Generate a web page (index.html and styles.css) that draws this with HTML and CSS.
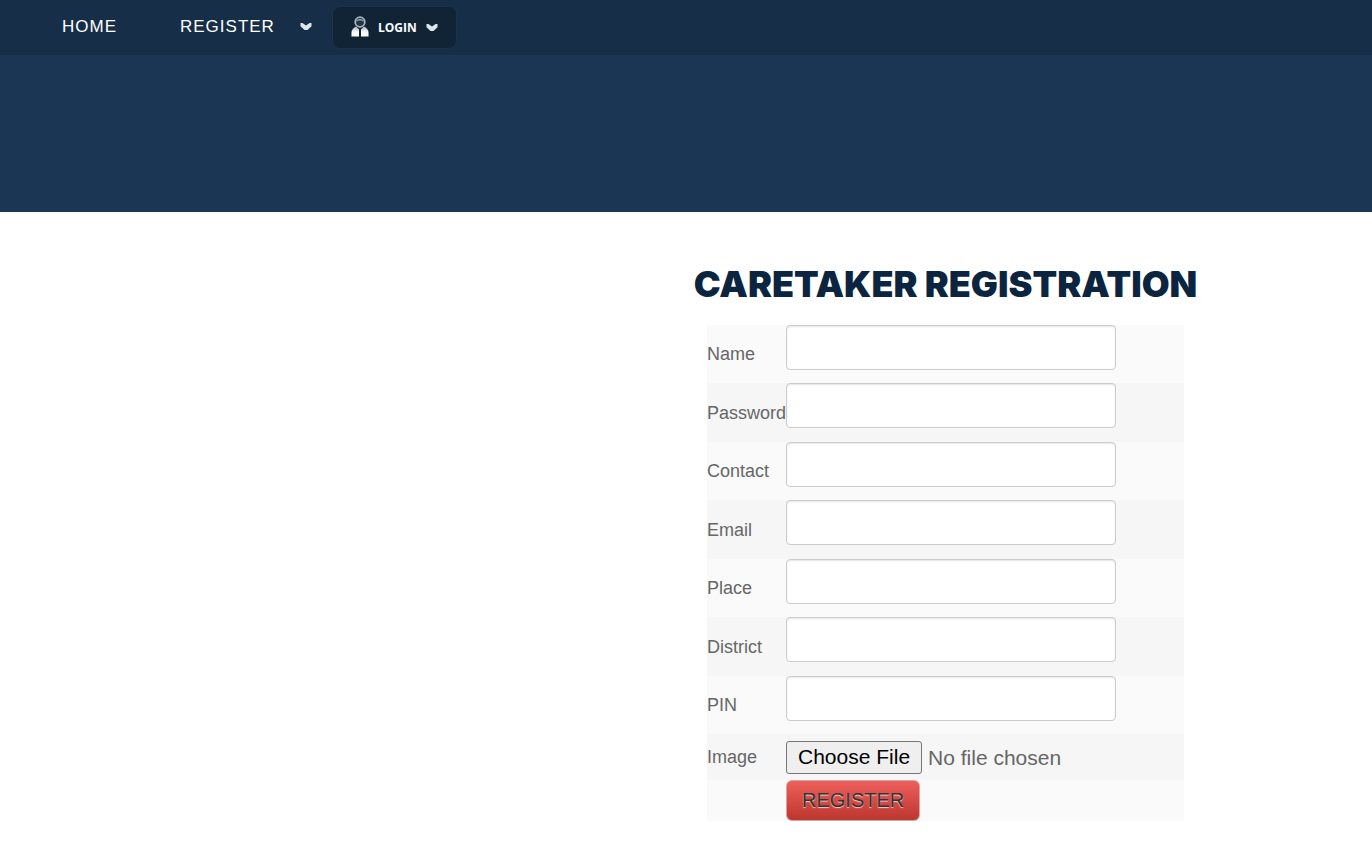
FILE: index.html
```html
<!DOCTYPE html>
<html lang="en">
<head>
<meta charset="utf-8">
<meta name="viewport" content="width=device-width, initial-scale=1">
<title>Caretaker Registration</title>
<link rel="stylesheet" href="styles.css">
</head>
<body>
<header class="banner">
  <nav class="navbar">
    <a class="nav-link" href="#">HOME</a>
    <a class="nav-link nav-register" href="#">REGISTER
      <svg class="chevron" viewBox="0 0 12 9" aria-hidden="true"><path d="M.5 1H2.500L6 3.600 9.500 1h2v3.200L7.500 8h-3L.5 4.200z"/></svg>
    </a>
    <button class="login" type="button">
      <svg class="person" viewBox="0 0 18 21" aria-hidden="true">
        <defs><linearGradient id="coat" x2="0" y2="1"><stop stop-color="#a9b2ba"/><stop offset="0.6" stop-color="#fff"/></linearGradient></defs>
        <circle cx="9" cy="6" r="4.8" fill="#203649" stroke="#a9b2ba" stroke-width="1.800"/>
        <path d="M5.500 5Q9 2.500 12.500 5" fill="none" stroke="#8d99a4" stroke-width="1.500"/>
        <path d="M5 10.500 8 13.500V20.500H.5v-4.500Q1 12.500 5 10.500zM13 10.500 10 13.500V20.500h7.500v-4.500Q17 12.500 13 10.500z" fill="url(#coat)"/>
      </svg>
      <span>LOGIN</span>
      <svg class="chevron" viewBox="0 0 12 9" aria-hidden="true"><path d="M.5 1H2.500L6 3.600 9.500 1h2v3.200L7.500 8h-3L.5 4.200z"/></svg>
    </button>
  </nav>
</header>
<main class="page">
  <section class="registration">
    <h1 class="title">CARETAKER REGISTRATION</h1>
    <form class="form">
      <div class="row"><label for="name">Name</label><input class="field" id="name" type="text"></div>
      <div class="row"><label for="password">Password</label><input class="field" id="password" type="password"></div>
      <div class="row"><label for="contact">Contact</label><input class="field" id="contact" type="text"></div>
      <div class="row"><label for="email">Email</label><input class="field" id="email" type="text"></div>
      <div class="row"><label for="place">Place</label><input class="field" id="place" type="text"></div>
      <div class="row"><label for="district">District</label><input class="field" id="district" type="text"></div>
      <div class="row"><label for="pin">PIN</label><input class="field" id="pin" type="text"></div>
      <div class="row row-file"><label for="image">Image</label><input class="file" id="image" type="file"></div>
      <div class="row row-submit"><button class="submit" type="submit">REGISTER</button></div>
    </form>
  </section>
</main>
</body>
</html>
```
FILE: styles.css
```css
* { box-sizing: border-box; }

body {
  margin: 0;
  background: #fff;
  color: #666;
  font-family: "Liberation Sans", Arial, sans-serif;
  font-size: 18px;
  line-height: 24px;
}

.banner {
  min-height: 212px;
  background: #1a3654;
}

.navbar {
  display: flex;
  align-items: center;
  height: 55px;
  padding: 0 62px;
  background: #162e47;
}

.nav-link {
  margin-bottom: 2px;
  color: #fff;
  font-size: 17px;
  letter-spacing: 1px;
  text-decoration: none;
}

.nav-register {
  display: flex;
  align-items: center;
  gap: 25px;
  margin-left: 63px;
}

.chevron {
  width: 12px;
  height: 9px;
  fill: #e0e5e9;
}

.login {
  display: flex;
  align-items: center;
  gap: 9px;
  height: 43px;
  margin-left: 20px;
  padding: 0 18px;
  border: 1px solid #1a334b;
  border-radius: 8px;
  background: #102436;
  color: #fff;
  font-family: "Open Sans", sans-serif;
  font-size: 12px;
  font-weight: 700;
}

.person {
  width: 18px;
  height: 21px;
  margin-bottom: 2px;
}

.page {
  display: flex;
  justify-content: flex-end;
  padding: 50px 167px 20px 20px;
}

.registration {
  display: flex;
  flex-direction: column;
  align-items: center;
  width: 519px;
  max-width: 100%;
}

.title {
  margin: 0 0 19px;
  color: #0b2440;
  font-family: "Arial Black", Inter, sans-serif;
  font-size: 36px;
  font-weight: 900;
  line-height: 44px;
}

.form {
  width: 477px;
  max-width: 100%;
}

.row {
  display: grid;
  grid-template-columns: 79px 1fr;
  align-items: center;
  height: 58px;
  background: #fafafa;
}

.row:nth-child(even) {
  height: 59px;
  background: #f6f6f6;
}

.field {
  align-self: start;
  width: 330px;
  max-width: 100%;
  height: 45px;
  padding: 4px 6px;
  border: 1px solid #ccc;
  border-radius: 4px;
  background: #fff;
  box-shadow: inset 0 1px 2px rgba(0, 0, 0, 0.1);
  color: #555;
  font: inherit;
}

.row.row-file {
  height: 46px;
}

.file {
  color: #666;
  font-family: inherit;
  font-size: 21px;
}

.file::file-selector-button {
  height: 33px;
  margin: 0 6px 0 0;
  padding: 0 11px;
  border: 1px solid #767676;
  border-radius: 3px;
  background: #efefef;
  color: #000;
  font: inherit;
}

.row.row-submit {
  height: 41px;
}

.submit {
  grid-column: 2;
  justify-self: start;
  height: 41px;
  padding: 0 15px;
  border: 1px solid #d9a5a3;
  border-radius: 6px;
  background: linear-gradient(#ee5f5b, #bd362f);
  color: #333;
  font-family: inherit;
  font-size: 20px;
  text-shadow: 0 1px 1px rgba(255, 255, 255, 0.75);
}
```
